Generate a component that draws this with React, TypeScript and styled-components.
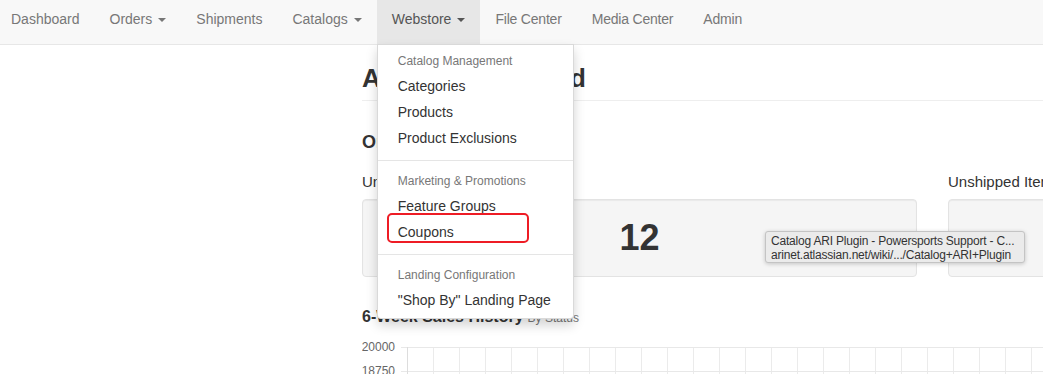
import styled, { createGlobalStyle } from 'styled-components';

const GlobalStyle = createGlobalStyle`
  html,
  body {
    margin: 0;
    padding: 0;
    background: #fff;
    overflow: hidden;
  }

  body {
    font-family: 'Liberation Sans', Arial, sans-serif;
    color: #333;
  }
`;

const Page = styled.div`
  position: relative;
  width: 1043px;
  height: 374px;
  overflow: hidden;
`;

const Navbar = styled.nav`
  display: flex;
  height: 44px;
  background-color: #f8f8f8;
  border-bottom: 1px solid #e7e7e7;
`;

const NavList = styled.ul`
  display: flex;
  margin: 0 0 0 -4px;
  padding: 0;
  list-style: none;
`;

const NavItem = styled.li<{ $active?: boolean }>`
  position: relative;
  z-index: ${({ $active }) => ($active ? 5 : 1)};
`;

const NavLink = styled.a<{ $active?: boolean; $tight?: boolean }>`
  display: block;
  height: 44px;
  box-sizing: border-box;
  padding: 9px 15px 15px;
  font-size: 14px;
  line-height: 20px;
  letter-spacing: ${({ $tight }) => ($tight ? '-0.2px' : '0')};
  white-space: nowrap;
  text-decoration: none;
  color: ${({ $active }) => ($active ? '#555' : '#777')};
  background-color: ${({ $active }) => ($active ? '#e7e7e7' : 'transparent')};
`;

const Caret = styled.span`
  display: inline-block;
  width: 0;
  height: 0;
  margin-left: 6px;
  vertical-align: middle;
  border-top: 4px solid;
  border-right: 4px solid transparent;
  border-left: 4px solid transparent;
`;

const DropdownMenu = styled.ul`
  position: absolute;
  top: 100%;
  left: 0;
  width: 197px;
  box-sizing: border-box;
  margin: 0;
  padding: 5px 0;
  list-style: none;
  background-color: #fff;
  border: 1px solid rgba(0, 0, 0, 0.15);
  border-radius: 0 0 4px 4px;
  box-shadow: 0 6px 12px rgba(0, 0, 0, 0.175);
`;

const DropdownHeader = styled.li`
  padding: 3px 20px;
  font-size: 12px;
  line-height: 17px;
  color: #777;
  white-space: nowrap;
`;

const DropdownLink = styled.a`
  position: relative;
  display: block;
  padding: 3px 20px;
  font-size: 14px;
  line-height: 20px;
  color: #333;
  text-decoration: none;
  white-space: nowrap;
`;

const Divider = styled.li`
  height: 1px;
  margin: 9px 0;
  background-color: #e5e5e5;
`;

const Highlight = styled.span`
  position: absolute;
  top: -6px;
  left: 9px;
  width: 142px;
  height: 30px;
  box-sizing: border-box;
  border: 2px solid #ee1c25;
  border-radius: 5px;
`;

const Main = styled.main`
  padding-left: 362px;
`;

const PageHeader = styled.div`
  margin-top: 18px;
  padding-bottom: 7px;
  border-bottom: 1px solid #eee;
`;

const Title = styled.h1`
  margin: 0;
  font-size: 26px;
  font-weight: bold;
  line-height: 30px;
  color: #333;
`;

const SectionTitle = styled.h3`
  margin: 31px 0 0;
  font-size: 18px;
  font-weight: bold;
  line-height: 20px;
  color: #333;
`;

const StatGrid = styled.div`
  display: grid;
  grid-template-columns: 555px 555px;
  column-gap: 31px;
  margin-top: 20px;
`;

const StatLabel = styled.div`
  margin-bottom: 7px;
  font-size: 15px;
  line-height: 20px;
  color: #333;
  white-space: nowrap;
`;

const StatCard = styled.div`
  display: flex;
  align-items: center;
  justify-content: center;
  height: 78px;
  box-sizing: border-box;
  background-color: #f5f5f5;
  border: 1px solid #e3e3e3;
  border-radius: 4px;
  box-shadow: inset 0 1px 1px rgba(0, 0, 0, 0.05);
  font-size: 36px;
  font-weight: bold;
  color: #333;
`;

const ChartTitle = styled.h4`
  margin: 30px 0 0;
  font-size: 16px;
  font-weight: bold;
  line-height: 20px;
  color: #333;

  & small {
    margin-left: 4px;
    font-size: 12px;
    font-weight: normal;
    color: #777;
  }
`;

const Chart = styled.svg`
  display: block;
  margin-top: 8px;
`;

const Tooltip = styled.div`
  position: absolute;
  top: 231px;
  left: 765px;
  width: 260px;
  height: 32px;
  box-sizing: border-box;
  padding: 2px 5px;
  font-size: 12px;
  line-height: 14px;
  letter-spacing: -0.2px;
  color: #333;
  white-space: nowrap;
  overflow: hidden;
  background-color: #ebebeb;
  border: 1px solid #c4c4c4;
  border-radius: 3px;
  box-shadow: 0 1px 4px rgba(0, 0, 0, 0.2);
`;

const navItems = [
  { label: 'Dashboard' },
  { label: 'Orders', caret: true },
  { label: 'Shipments' },
  { label: 'Catalogs', caret: true },
  { label: 'Webstore', caret: true, active: true },
  { label: 'File Center', tight: true },
  { label: 'Media Center', tight: true },
  { label: 'Admin', tight: true },
];

const menuGroups = [
  { header: 'Catalog Management', items: ['Categories', 'Products', 'Product Exclusions'] },
  { header: 'Marketing & Promotions', items: ['Feature Groups', 'Coupons'] },
  { header: 'Landing Configuration', items: ['"Shop By" Landing Page'] },
];

function WebstoreMenu() {
  const rows: JSX.Element[] = [];
  menuGroups.forEach((group, i) => {
    if (i > 0) rows.push(<Divider key={`d-${group.header}`} />);
    rows.push(<DropdownHeader key={group.header}>{group.header}</DropdownHeader>);
    group.items.forEach((item) =>
      rows.push(
        <li key={item}>
          <DropdownLink href="#">
            {item}
            {item === 'Coupons' && <Highlight />}
          </DropdownLink>
        </li>
      )
    );
  });

  return <DropdownMenu>{rows}</DropdownMenu>;
}

function SalesChart() {
  const width = 681;
  const left = 45;
  const rows = [
    { y: 11, label: '20000' },
    { y: 35, label: '18750' },
  ];
  const cols: number[] = [];
  for (let x = left; x < width; x += 26) cols.push(x);

  return (
    <Chart width={width} height={39}>
      {cols.map((x) => (
        <line key={x} x1={x + 0.5} y1={11} x2={x + 0.5} y2={39} stroke="#ebebeb" />
      ))}
      {rows.map((r) => (
        <g key={r.label}>
          <line x1={left - 6} y1={r.y + 0.5} x2={width} y2={r.y + 0.5} stroke="#e8e8e8" />
          <text
            x={33}
            y={r.y + 4}
            textAnchor="end"
            fontSize="12"
            fill="#666"
            fontFamily="'Liberation Sans', Arial, sans-serif"
          >
            {r.label}
          </text>
        </g>
      ))}
      <line x1={left + 0.5} y1={11} x2={left + 0.5} y2={39} stroke="#ddd" />
    </Chart>
  );
}

export default function App() {
  return (
    <Page>
      <GlobalStyle />
      <Navbar>
        <NavList>
          {navItems.map((item) => (
            <NavItem key={item.label} $active={item.active}>
              <NavLink href="#" $active={item.active} $tight={item.tight}>
                {item.label}
                {item.caret && <Caret />}
              </NavLink>
              {item.active && <WebstoreMenu />}
            </NavItem>
          ))}
        </NavList>
      </Navbar>

      <Main>
        <PageHeader>
          <Title>Admin Dashboard</Title>
        </PageHeader>

        <SectionTitle>Orders</SectionTitle>

        <StatGrid>
          <div>
            <StatLabel>Unshipped Orders</StatLabel>
            <StatCard>12</StatCard>
          </div>
          <div>
            <StatLabel>Unshipped Items</StatLabel>
            <StatCard>27</StatCard>
          </div>
        </StatGrid>

        <ChartTitle>
          6-Week Sales History<small>By Status</small>
        </ChartTitle>
        <SalesChart />
      </Main>

      <Tooltip>
        Catalog ARI Plugin - Powersports Support - C...
        <br />
        arinet.atlassian.net/wiki/.../Catalog+ARI+Plugin
      </Tooltip>
    </Page>
  );
}
